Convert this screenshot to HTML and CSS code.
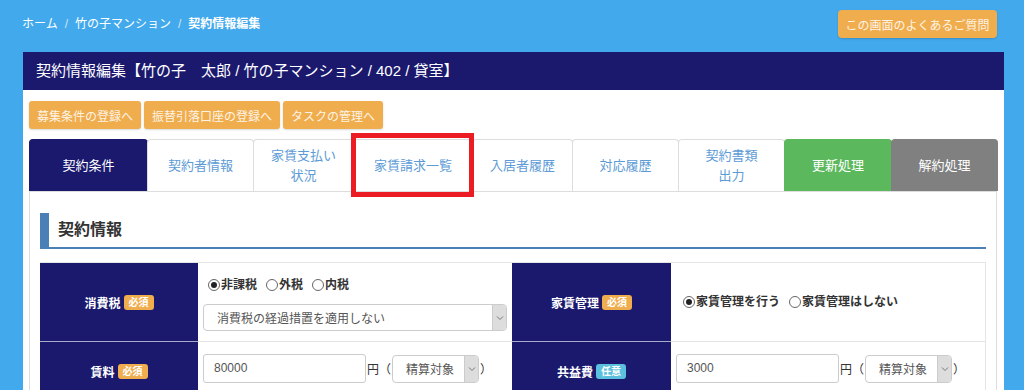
FILE: index.html
```html
<!DOCTYPE html>
<html lang="ja">
<head>
    <meta charset="UTF-8">
    <meta name="viewport" content="width=device-width, initial-scale=1.0">
    <title>契約情報編集</title>
    <link rel="stylesheet" href="styles.css">
</head>
<body>

    <!-- Top bar: breadcrumb + FAQ -->
    <div class="topbar">
        <ol class="breadcrumb">
            <li><a href="#">ホーム</a></li>
            <li class="sep">/</li>
            <li><a href="#">竹の子マンション</a></li>
            <li class="sep">/</li>
            <li class="current">契約情報編集</li>
        </ol>
        <button class="faq-btn">この画面のよくあるご質問</button>
    </div>

    <div class="panel">
        <div class="panel-heading">契約情報編集【竹の子　太郎 / 竹の子マンション / 402 / 貸室】</div>

        <div class="panel-body">
            <!-- Quick links -->
            <div class="link-btns">
                <button class="btn-warning">募集条件の登録へ</button>
                <button class="btn-warning">振替引落口座の登録へ</button>
                <button class="btn-warning">タスクの管理へ</button>
            </div>

            <!-- Tabs -->
            <ul class="tabs">
                <li class="tab active w-118">契約条件</li>
                <li class="tab w-106">契約者情報</li>
                <li class="tab w-100">家賃支払い<br>状況</li>
                <li class="tab w-119 marked">家賃請求一覧</li>
                <li class="tab w-100">入居者履歴</li>
                <li class="tab w-106">対応履歴</li>
                <li class="tab w-106">契約書類<br>出力</li>
                <li class="tab renew w-107">更新処理</li>
                <li class="tab cancel w-106">解約処理</li>
            </ul>

            <div class="tab-content">
                <h2 class="section-title">契約情報</h2>

                <div class="form-table">
                    <!-- row 1 -->
                    <div class="label-cell">消費税<span class="badge req">必須</span></div>
                    <div class="value-cell">
                        <div class="radios">
                            <label class="radio"><span class="dot checked"></span>非課税</label>
                            <label class="radio"><span class="dot"></span>外税</label>
                            <label class="radio"><span class="dot"></span>内税</label>
                        </div>
                        <div class="select wide">
                            <span class="select-text">消費税の経過措置を適用しない</span>
                            <span class="caret"><svg width="8" height="6" viewBox="0 0 8 6"><path d="M1 1.5 L4 4.5 L7 1.5" fill="none" stroke="#777" stroke-width="1"/></svg></span>
                        </div>
                    </div>
                    <div class="label-cell">家賃管理<span class="badge req">必須</span></div>
                    <div class="value-cell middle">
                        <div class="radios">
                            <label class="radio"><span class="dot checked"></span>家賃管理を行う</label>
                            <label class="radio"><span class="dot"></span>家賃管理はしない</label>
                        </div>
                    </div>

                    <!-- row 2 -->
                    <div class="label-cell">賃料<span class="badge req">必須</span></div>
                    <div class="value-cell">
                        <div class="amount">
                            <div class="input">80000</div>
                            <span class="unit">円（</span>
                            <div class="select narrow">
                                <span class="select-text">精算対象</span>
                                <span class="caret"><svg width="8" height="6" viewBox="0 0 8 6"><path d="M1 1.5 L4 4.5 L7 1.5" fill="none" stroke="#777" stroke-width="1"/></svg></span>
                            </div>
                            <span class="unit">）</span>
                        </div>
                    </div>
                    <div class="label-cell">共益費<span class="badge opt">任意</span></div>
                    <div class="value-cell">
                        <div class="amount">
                            <div class="input">3000</div>
                            <span class="unit">円（</span>
                            <div class="select narrow">
                                <span class="select-text">精算対象</span>
                                <span class="caret"><svg width="8" height="6" viewBox="0 0 8 6"><path d="M1 1.5 L4 4.5 L7 1.5" fill="none" stroke="#777" stroke-width="1"/></svg></span>
                            </div>
                            <span class="unit">）</span>
                        </div>
                    </div>
                </div>
            </div>
        </div>
    </div>

</body>
</html>
```

FILE: styles.css
```css
/* General Reset */
* {
    margin: 0;
    padding: 0;
    box-sizing: border-box;
    font-family: "Liberation Sans", "Noto Sans CJK JP", sans-serif;
}

body {
    background-color: #42a9ec;
    color: #333333;
    height: 390px;
    overflow: hidden;
}

/* Top bar */
.topbar {
    display: flex;
    justify-content: space-between;
    align-items: flex-start;
    padding: 10px 27px 0 22px;
    height: 52px;
}

.breadcrumb {
    list-style: none;
    display: flex;
    gap: 7px;
    font-size: 12px;
    line-height: 24px;
    margin-top: 2px;
    color: #ffffff;
}

.breadcrumb a {
    color: #ffffff;
    text-decoration: none;
}

.breadcrumb .sep {
    color: #cfe6f8;
}

.breadcrumb .current {
    font-weight: bold;
}

.faq-btn {
    height: 28px;
    width: 159px;
    background-color: #f0ad4e;
    color: #fdf3e4;
    border: none;
    border-radius: 4px;
    font-size: 12px;
    box-shadow: 0 1px 2px rgba(0, 0, 0, 0.15);
}

/* Main panel */
.panel {
    margin: 0 20px 0 23px;
    background-color: #ffffff;
}

.panel-heading {
    height: 38px;
    background-color: #1b196e;
    color: #ffffff;
    font-size: 15px;
    line-height: 38px;
    padding-left: 13px;
}

.panel-body {
    padding: 11px 7px 0 6px;
}

/* Quick link buttons */
.link-btns {
    display: flex;
    gap: 3px;
}

.btn-warning {
    height: 28px;
    padding: 0 8px;
    background-color: #f0ad4e;
    color: #fdf3e4;
    border: none;
    border-radius: 3px;
    font-size: 12px;
    box-shadow: 0 1px 2px rgba(0, 0, 0, 0.15);
}

/* Tabs */
.tabs {
    list-style: none;
    display: flex;
    margin-top: 10px;
    border-bottom: 1px solid #dddddd;
}

.tab {
    height: 52px;
    display: flex;
    align-items: center;
    justify-content: center;
    text-align: center;
    font-size: 13px;
    line-height: 20px;
    color: #5d9bd6;
    border: 1px solid #dddddd;
    border-bottom: none;
    border-radius: 4px 4px 0 0;
    margin-right: -1px;
}

.tab.active {
    background-color: #1b196e;
    border-color: #1b196e;
    color: #ffffff;
}

.tab.renew {
    background-color: #5cb85c;
    border-color: #5cb85c;
    color: #ffffff;
}

.tab.cancel {
    background-color: #808080;
    border-color: #808080;
    color: #ffffff;
}

.w-100 { width: 101px; }
.w-106 { width: 107px; }
.w-107 { width: 108px; }
.w-118 { width: 119px; }
.w-119 { width: 120px; }

/* red annotation box over the tab */
.tab.marked {
    position: relative;
}

.tab.marked::after {
    content: "";
    position: absolute;
    left: -3px;
    right: -2px;
    top: -7px;
    bottom: -6px;
    border: 5px solid #ec1c24;
}

/* Tab content */
.tab-content {
    border: 1px solid #dddddd;
    border-top: none;
    padding: 21px 10px 0 10px;
    height: 220px;
}

.section-title {
    font-size: 16px;
    font-weight: bold;
    color: #333333;
    height: 36px;
    line-height: 34px;
    padding-left: 9px;
    border-left: 9px solid #4a80b6;
    border-bottom: 2px solid #4a80b6;
    margin-bottom: 13px;
}

/* Form table */
.form-table {
    display: grid;
    grid-template-columns: 158px 314px 159px 315px;
    grid-template-rows: 79px 60px;
    border-top: 1px solid #e5e5e5;
    border-right: 1px solid #e5e5e5;
}

.label-cell {
    background-color: #1b196e;
    color: #ffffff;
    font-size: 12px;
    font-weight: bold;
    display: flex;
    align-items: center;
    justify-content: center;
    gap: 3px;
    border-bottom: 1px solid #a9a9c9;
}

.badge {
    font-size: 10px;
    font-weight: bold;
    color: #ffffff;
    padding: 1px 5px;
    border-radius: 3px;
    line-height: 13px;
}

.badge.req {
    background-color: #f0ad4e;
}

.badge.opt {
    background-color: #5bc0de;
}

.value-cell {
    padding: 11px 6px 0 5px;
    border-bottom: 1px solid #e5e5e5;
}

.value-cell.middle {
    display: flex;
    align-items: center;
    padding: 0 7px;
}

.radios {
    display: flex;
    gap: 9px;
    font-size: 12px;
    font-weight: bold;
    line-height: 22px;
    margin-left: 5px;
}

.radio {
    display: flex;
    align-items: center;
}

.dot {
    width: 12px;
    height: 12px;
    border: 1px solid #666666;
    border-radius: 50%;
    margin-right: 1px;
    position: relative;
    background-color: #ffffff;
}

.dot.checked::after {
    content: "";
    position: absolute;
    left: 2px;
    top: 2px;
    width: 6px;
    height: 6px;
    border-radius: 50%;
    background-color: #222222;
}

.select {
    display: flex;
    align-items: center;
    height: 27px;
    border: 1px solid #cccccc;
    border-radius: 4px;
    background-color: #ffffff;
    font-size: 12px;
    color: #555555;
    overflow: hidden;
}

.select.wide {
    margin-top: 8px;
    width: 304px;
}

.select.narrow {
    width: 87px;
    height: 28px;
}

.select-text {
    flex: 1;
    padding-left: 13px;
}

.caret {
    width: 14px;
    height: 100%;
    background-color: #dddddd;
    border-left: 1px solid #cccccc;
    display: flex;
    align-items: center;
    justify-content: center;
}

.amount {
    display: flex;
    align-items: center;
    margin-top: 1px;
}

.input {
    width: 163px;
    height: 29px;
    border: 1px solid #cccccc;
    border-radius: 3px;
    font-size: 12px;
    line-height: 27px;
    padding-left: 10px;
    color: #555555;
}

.unit {
    font-size: 12px;
    color: #333333;
    padding: 0 1px;
}
```
